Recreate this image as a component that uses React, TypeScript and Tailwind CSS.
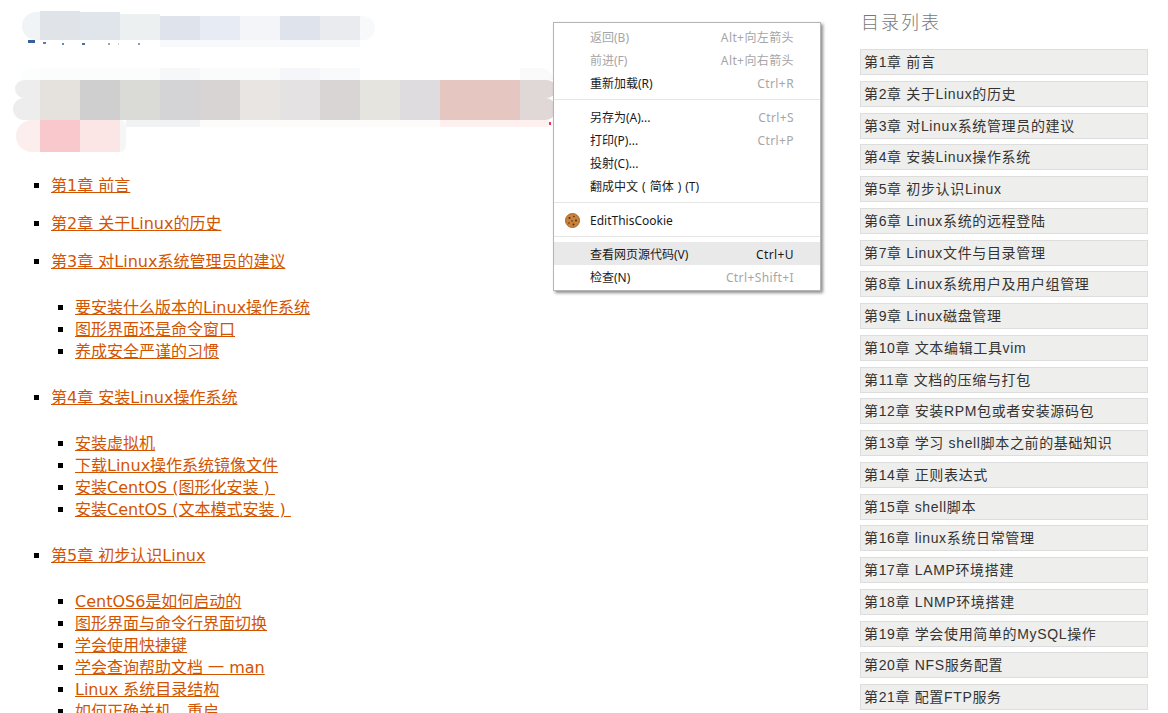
import type { ReactNode } from "react";

const topics = [
  { title: "第1章 前言", subs: [] as string[] },
  { title: "第2章 关于Linux的历史", subs: [] },
  {
    title: "第3章 对Linux系统管理员的建议",
    subs: ["要安装什么版本的Linux操作系统", "图形界面还是命令窗口", "养成安全严谨的习惯"],
  },
  {
    title: "第4章 安装Linux操作系统",
    subs: ["安装虚拟机", "下载Linux操作系统镜像文件", "安装CentOS (图形化安装 )\u00a0", "安装CentOS (文本模式安装 )\u00a0"],
  },
  {
    title: "第5章 初步认识Linux",
    subs: [
      "CentOS6是如何启动的",
      "图形界面与命令行界面切换",
      "学会使用快捷键",
      "学会查询帮助文档 一 man",
      "Linux 系统目录结构",
      "如何正确关机、重启",
    ],
  },
];

const chapters = [
  "第1章 前言",
  "第2章 关于Linux的历史",
  "第3章 对Linux系统管理员的建议",
  "第4章 安装Linux操作系统",
  "第5章 初步认识Linux",
  "第6章 Linux系统的远程登陆",
  "第7章 Linux文件与目录管理",
  "第8章 Linux系统用户及用户组管理",
  "第9章 Linux磁盘管理",
  "第10章 文本编辑工具vim",
  "第11章 文档的压缩与打包",
  "第12章 安装RPM包或者安装源码包",
  "第13章 学习 shell脚本之前的基础知识",
  "第14章 正则表达式",
  "第15章 shell脚本",
  "第16章 linux系统日常管理",
  "第17章 LAMP环境搭建",
  "第18章 LNMP环境搭建",
  "第19章 学会使用简单的MySQL操作",
  "第20章 NFS服务配置",
  "第21章 配置FTP服务",
];

const blurRow1 = [
  "h-[28px] w-[18px] rounded-l-[14px] bg-[#f1f4f7]",
  "h-[29px] w-10 bg-[#e0e3e8]",
  "h-[28px] w-10 bg-[#e0e5ec]",
  "h-[26px] w-10 bg-[#edf0f1]",
  "h-6 w-10 bg-[#dfe4ec]",
  "h-6 w-10 bg-[#e7ebf3]",
  "h-6 w-10 bg-[#f3f5f8]",
  "h-6 w-10 bg-[#dfe4ec]",
  "h-6 w-10 bg-[#e9ebef]",
  "h-6 w-[15px] rounded-r-xl bg-[#f8f9fb]",
];

const blurStrip = [
  "w-5 rounded-tl-2xl bg-[#fcfdfd]",
  "w-[120px] bg-[#fbfcfc]",
  "w-10 bg-[#f6f7f9]",
  "w-20 bg-[#fafbfb]",
  "w-10 bg-[#f5f6f9]",
  "w-10 bg-[#f9fafb]",
  "w-[160px] bg-white",
  "w-[33px] rounded-tr-2xl bg-[#fafafa]",
];

const blurRow2 = [
  "w-10 bg-[#e5e2dd]",
  "w-10 bg-[#cfcfd0]",
  "w-10 bg-[#dadbd6]",
  "w-10 bg-[#d4d4d6]",
  "w-10 bg-[#d8d4d4]",
  "w-10 bg-[#e8e5e2]",
  "w-10 bg-[#e4e2e3]",
  "w-10 bg-[#dad5d5]",
  "w-10 bg-[#e6e4de]",
  "w-10 bg-[#dfdcdf]",
  "w-20 bg-[#e5c6c1]",
];

const blurRow3 = [
  "w-[24px] rounded-l-2xl bg-[#fbeeec]",
  "w-10 bg-[#f9c8cc]",
  "w-10 bg-[#fce6e5]",
  "w-[6px] rounded-r-xl bg-[#f5f7f7]",
];

function BlurredHeader() {
  return (
    <div className="pt-[11px]">
      <div className="flex h-[29px] items-end pl-[22px]">
        {blurRow1.map((c, i) => (
          <div key={i} className={c}></div>
        ))}
      </div>
      <div className="flex h-[7px] pl-[28px]">
        <div className="h-[3px] w-[7px] bg-[#3a5f9a]"></div>
        <div className="mt-[2px] ml-2 h-[2px] w-[3px] bg-[#5f7da8]"></div>
        <div className="mt-[3px] ml-4 h-[2px] w-[2px] bg-[#5b8ac0]"></div>
        <div className="mt-[3px] ml-[18px] h-[2px] w-[3px] bg-[#4a70a5]"></div>
        <div className="mt-[3px] ml-[23px] h-[2px] w-[2px] bg-[#b09aa8]"></div>
        <div className="mt-[3px] ml-2 h-[2px] w-[1px] bg-[#c5cdda]"></div>
        <div className="mt-[3px] ml-[19px] h-[2px] w-[2px] bg-[#8f95b5]"></div>
        <div className="ml-5 w-[200px] bg-[#f8f9fb]"></div>
      </div>
      <div className="mt-[21px] flex h-3 pl-5">
        {blurStrip.map((c, i) => (
          <div key={i} className={c}></div>
        ))}
      </div>
      <div className="flex h-10 pl-[13px]">
        <div className="flex w-[27px] flex-col items-end">
          <div className="h-[18px] w-[25px] rounded-l-[9px] bg-[#ecedec]"></div>
          <div className="h-[22px] w-[27px] rounded-l-[11px] bg-[#ecedec]"></div>
        </div>
        {blurRow2.map((c, i) => (
          <div key={i} className={c}></div>
        ))}
        <div className="flex w-9 flex-col">
          <div className="h-[18px] w-9 rounded-r-[9px] bg-[#e0d7d7]"></div>
          <div className="h-[22px] w-9 rounded-r-[11px] bg-[#e0d7d7]"></div>
        </div>
      </div>
      <div className="flex items-start pl-4">
        <div className="flex h-8">
          {blurRow3.map((c, i) => (
            <div key={i} className={c}></div>
          ))}
        </div>
        <div className="flex h-[7px] w-[434px]">
          <div className="w-[74px] bg-[#f1f2f3]"></div>
          <div className="w-[240px] bg-[#fcfbfa]"></div>
          <div className="w-[109px] bg-[#fdf0ef]"></div>
          <div className="mt-[2px] h-[3px] w-[2px] bg-[#e8345a]"></div>
        </div>
      </div>
    </div>
  );
}

function TopicList() {
  return (
    <ul className="mt-[23px] list-[square] pl-[51px] font-['DejaVu_Sans','Noto_Sans_CJK_SC',sans-serif] text-base leading-[22px] text-black">
      {topics.map((t) => (
        <li key={t.title} className="mb-4">
          <a className="text-[#d35400] underline">{t.title}</a>
          {t.subs.length > 0 && (
            <ul className="mt-6 mb-6 list-[square] pl-6">
              {t.subs.map((s) => (
                <li key={s}>
                  <a className="text-[#d35400] underline">{s}</a>
                </li>
              ))}
            </ul>
          )}
        </li>
      ))}
    </ul>
  );
}

function CookieIcon() {
  return (
    <svg width="15" height="15" viewBox="0 0 15 15" className="mr-[10px] ml-[11px]">
      <circle cx="7.5" cy="7.5" r="7" fill="#c9813c" />
      <circle cx="7.5" cy="7.5" r="7" fill="none" stroke="#a8672b" strokeWidth="1" />
      <circle cx="4.5" cy="5" r="1" fill="#4f2f14" />
      <circle cx="9" cy="3.5" r="0.8" fill="#4f2f14" />
      <circle cx="11" cy="7.5" r="1" fill="#4f2f14" />
      <circle cx="7" cy="8" r="0.8" fill="#4f2f14" />
      <circle cx="4" cy="10" r="0.8" fill="#4f2f14" />
      <circle cx="8.5" cy="11.5" r="1" fill="#4f2f14" />
    </svg>
  );
}

function MenuRow({
  label,
  shortcut,
  disabled,
  active,
}: {
  label: ReactNode;
  shortcut?: string;
  disabled?: boolean;
  active?: boolean;
}) {
  return (
    <div
      className={
        "flex h-[23px] items-center justify-between pt-[2px] pr-[26px] pl-9 " +
        (active ? "bg-[#e9e9e9] " : "") +
        (disabled ? "text-[#a6a6a6]" : "text-[#1a1a1a]")
      }
    >
      <span>{label}</span>
      {shortcut && (
        <span className={"tracking-[0.4px] " + (active ? "text-[#1a1a1a]" : "text-[#a6a6a6]")}>{shortcut}</span>
      )}
    </div>
  );
}

function MenuSeparator() {
  return (
    <div className="flex h-[11px] items-center">
      <div className="h-px w-full bg-[#e6e6e6]"></div>
    </div>
  );
}

function ContextMenu() {
  return (
    <div className="absolute top-[22px] left-[553px] w-[268px] border border-[#b5b5b5] bg-white pt-[2px] pb-[2px] font-['Noto_Sans','Noto_Sans_CJK_SC',sans-serif] text-xs shadow-[2px_2px_3px_rgba(0,0,0,0.45)]">
      <MenuRow label="返回(B)" shortcut="Alt+向左箭头" disabled />
      <MenuRow label="前进(F)" shortcut="Alt+向右箭头" disabled />
      <MenuRow label="重新加载(R)" shortcut="Ctrl+R" />
      <MenuSeparator />
      <MenuRow label="另存为(A)..." shortcut="Ctrl+S" />
      <MenuRow label="打印(P)..." shortcut="Ctrl+P" />
      <MenuRow label="投射(C)..." />
      <MenuRow
        label={
          <>
            翻成中文<span className="mx-1">(</span>简体<span className="mx-1">)</span>(T)
          </>
        }
      />
      <MenuSeparator />
      <div className="flex h-[23px] items-center pt-[2px] text-[#1a1a1a]">
        <CookieIcon />
        <span>EditThisCookie</span>
      </div>
      <MenuSeparator />
      <MenuRow label="查看网页源代码(V)" shortcut="Ctrl+U" active />
      <MenuRow label="检查(N)" shortcut="Ctrl+Shift+I" />
    </div>
  );
}

export default function App() {
  return (
    <div className="relative flex h-[713px] overflow-hidden bg-white font-['Liberation_Sans','Noto_Sans_CJK_SC',sans-serif]">
      <div className="w-[860px] shrink-0">
        <BlurredHeader />
        <TopicList />
      </div>
      <div className="w-[288px] shrink-0">
        <p className="mt-[10px] mb-[12px] ml-[1px] text-lg leading-[27px] font-light tracking-[2px] text-[#777]">目录列表</p>
        <div className="flex flex-col gap-[5.75px]">
          {chapters.map((c) => (
            <div
              key={c}
              className="flex h-[26px] items-center border border-[#ddd] bg-[#eeeeec] pl-[3px] text-sm tracking-[0.65px] text-[#333]"
            >
              {c}
            </div>
          ))}
        </div>
      </div>
      <ContextMenu />
    </div>
  );
}
